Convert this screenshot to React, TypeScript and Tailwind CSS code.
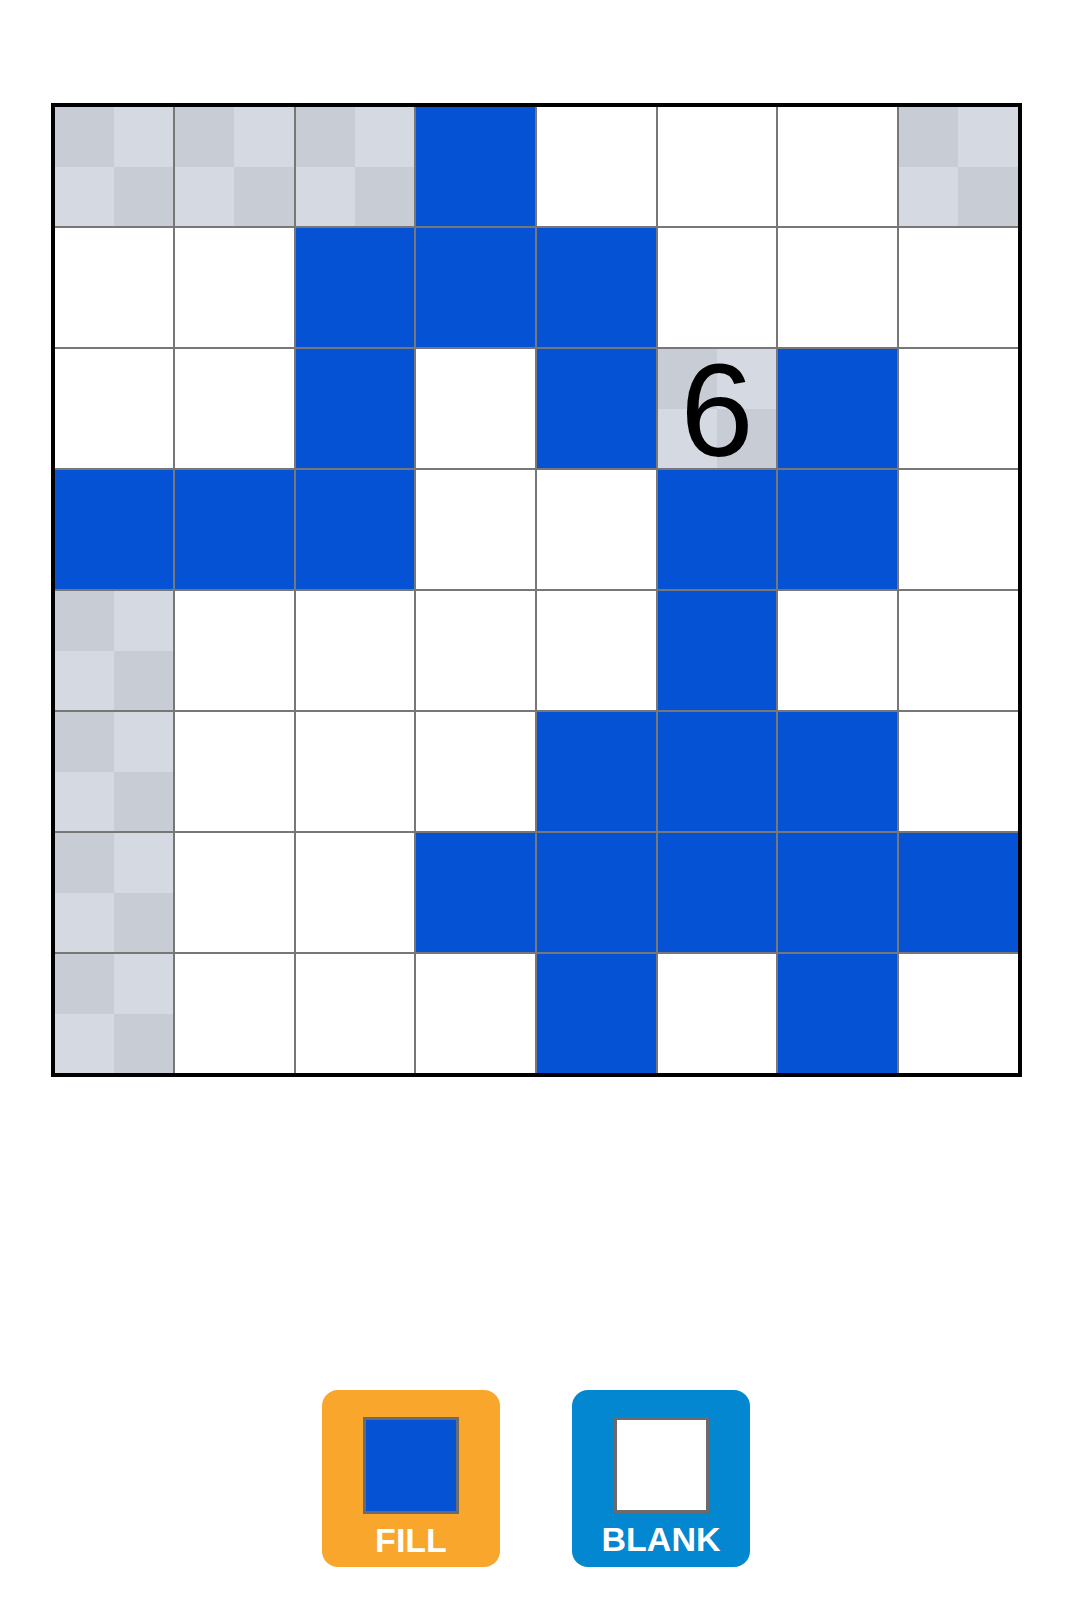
import React from "react";

const layout = [
  "GGGBWWWG",
  "WWBBBWWW",
  "WWBW BW".length === 7 ? "WWBWB6BW" : "WWBWB6BW",
  "BBBWWBBW",
  "GWWWWBWW",
  "GWWWBBBW",
  "GWWBBBBB",
  "GWWWBWBW",
];

function Checker({ children }: { children?: React.ReactNode }) {
  return (
    <div className="relative w-full h-full grid grid-cols-2 grid-rows-2">
      <div className="bg-[#c8ccd4]" />
      <div className="bg-[#d5d9e2]" />
      <div className="bg-[#d5d9e2]" />
      <div className="bg-[#c8ccd4]" />
      {children ? (
        <div className="absolute inset-0 flex items-center justify-center text-black text-[132px] leading-none pt-[4px] font-['Liberation_Sans',Arial,sans-serif]">
          {children}
        </div>
      ) : null}
    </div>
  );
}

function Cell({ t }: { t: string }) {
  if (t === "B") return <div className="bg-[#0652d5]" />;
  if (t === "W") return <div className="bg-white" />;
  if (t === "G") return <Checker />;
  return <Checker>{t}</Checker>;
}

export default function App() {
  return (
    <div className="w-[1072px] min-h-[1600px] bg-white flex flex-col items-center font-['Liberation_Sans',Arial,sans-serif]">
      <div className="mt-[103px] w-[971px] h-[974px] border-[4px] border-black bg-[#777777] grid grid-cols-8 grid-rows-8 gap-[2px]">
        {layout.map((row, r) =>
          row.split("").map((t, c) => <Cell key={`${r}-${c}`} t={t} />)
        )}
      </div>
      <div className="mt-[313px] flex gap-[72px]">
        <div className="w-[178px] h-[177px] rounded-[16px] bg-[#f8a62c] flex flex-col items-center pt-[27px]">
          <div className="w-[96px] h-[97px] border-[3px] border-[#6b6b6b] bg-[#0652d5]" />
          <div className="mt-[9px] text-white font-bold text-[34px] leading-none">FILL</div>
        </div>
        <div className="w-[178px] h-[177px] rounded-[16px] bg-[#0387d0] flex flex-col items-center pt-[27px]">
          <div className="w-[95px] h-[96px] border-[3px] border-[#6b6b6b] bg-white" />
          <div className="mt-[9px] text-white font-bold text-[34px] leading-none">BLANK</div>
        </div>
      </div>
    </div>
  );
}
